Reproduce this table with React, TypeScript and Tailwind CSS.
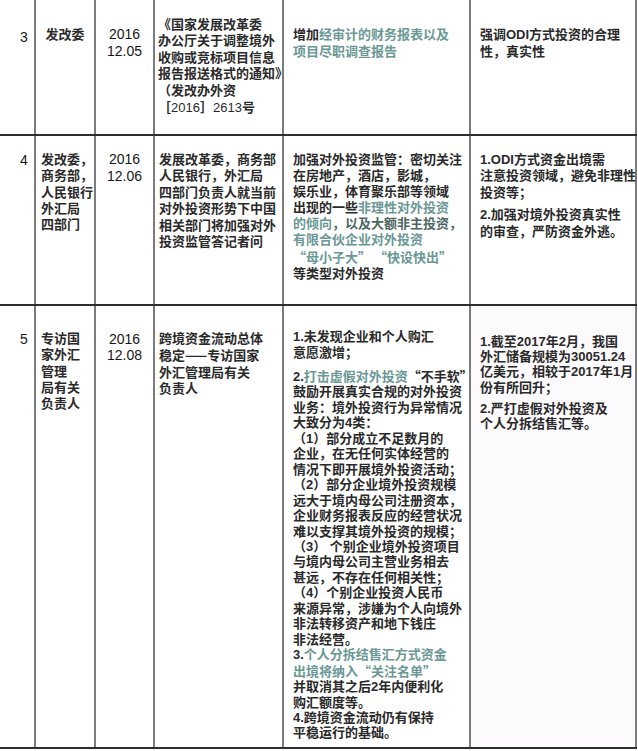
import type { ReactNode } from 'react';

const FONT = { fontFamily: '"Liberation Sans", "Noto Sans CJK SC", sans-serif' };

function T({ children }: { children: ReactNode }) {
  return <span className="text-[#6a9895]">{children}</span>;
}

// full-width punctuation from the CJK face
function C({ children }: { children: ReactNode }) {
  return <span className="font-['Noto_Sans_CJK_SC',sans-serif]">{children}</span>;
}

function Lines({ lines, lh }: { lines: ReactNode[]; lh: string }) {
  return (
    <div className={lh}>
      {lines.map((line, i) => (
        <div key={i} className="whitespace-nowrap">
          {line}
        </div>
      ))}
    </div>
  );
}

export default function App() {
  return (
    <div className="h-[751px] w-[638px] overflow-hidden bg-white text-[13px] font-semibold text-[#2a2a2a]" style={FONT}>
      {/* row 3 */}
      <div className="flex h-[136px] w-[637px] border-b-2 border-[#2e2e2e]">
        <div className="w-[36px] shrink-0 border-r-2 border-[#7c7c7c] pl-[20px] pt-[29px] text-[14px] font-normal leading-[16px] text-[#161616]">3</div>
        <div className="w-[60px] shrink-0 border-r-2 border-[#7c7c7c] pt-[27px] text-center leading-[16px]">发改委</div>
        <div className="w-[59px] shrink-0 border-r-2 border-[#7c7c7c] pt-[26px] text-center text-[14px] font-normal leading-[17px] text-[#161616]">
          <div>2016</div>
          <div>12.05</div>
        </div>
        <div className="w-[129px] shrink-0 border-r-2 border-[#7c7c7c] pl-[3px] pt-[17px]">
          <Lines
            lh="leading-[16.4px]"
            lines={[
              '《国家发展改革委',
              '办公厅关于调整境外',
              '收购或竞标项目信息',
              '报告报送格式的通知》',
              '（发改办外资',
              <>
                <C>［</C>
                <span className="font-normal">2016</span>
                <C>］</C>
                <span className="font-normal">2613</span>号
              </>,
            ]}
          />
        </div>
        <div className="w-[187px] shrink-0 border-r-2 border-[#7c7c7c] pl-[9px] pt-[27px]">
          <Lines
            lh="leading-[16.5px]"
            lines={[
              <>
                增加<T>经审计的财务报表以及</T>
              </>,
              <T>项目尽职调查报告</T>,
            ]}
          />
        </div>
        <div className="w-[166px] shrink-0 border-r-2 border-[#7c7c7c] pl-[9px] pt-[27px]">
          <Lines lh="leading-[16.5px]" lines={['强调ODI方式投资的合理', '性，真实性']} />
        </div>
      </div>

      {/* row 4 */}
      <div className="flex h-[170px] w-[637px] border-b-2 border-[#2e2e2e]">
        <div className="w-[36px] shrink-0 border-r-2 border-[#7c7c7c] pl-[20px] pt-[16px] text-[14px] font-normal leading-[16px] text-[#161616]">4</div>
        <div className="w-[60px] shrink-0 border-r-2 border-[#7c7c7c] pl-[5px] pt-[16px]">
          <Lines lh="leading-[16.3px]" lines={['发改委，', '商务部，', '人民银行', '外汇局', '四部门']} />
        </div>
        <div className="w-[59px] shrink-0 border-r-2 border-[#7c7c7c] pt-[15px] text-center text-[14px] font-normal leading-[17px] text-[#161616]">
          <div>2016</div>
          <div>12.06</div>
        </div>
        <div className="w-[129px] shrink-0 border-r-2 border-[#7c7c7c] pl-[4px] pt-[16px]">
          <Lines
            lh="leading-[16.4px]"
            lines={['发展改革委，商务部', '人民银行，外汇局', '四部门负责人就当前', '对外投资形势下中国', '相关部门将加强对外', '投资监管答记者问']}
          />
        </div>
        <div className="w-[187px] shrink-0 border-r-2 border-[#7c7c7c] pl-[9px] pt-[16px]">
          <Lines
            lh="leading-[16.1px]"
            lines={[
              '加强对外投资监管：密切关注',
              '在房地产，酒店，影城，',
              '娱乐业，体育聚乐部等领域',
              <>
                出现的一些<T>非理性对外投资</T>
              </>,
              <>
                <T>的倾向</T>
                <span className="text-[#4d6664]">，以及大额非主投资，</span>
              </>,
              <T>有限合伙企业对外投资</T>,
              <T>
                <C>“母小子大” “快设快出”</C>
              </T>,
              '等类型对外投资',
            ]}
          />
        </div>
        <div className="w-[166px] shrink-0 border-r-2 border-[#7c7c7c] pl-[9px] pt-[16px]">
          <Lines lh="leading-[16.4px]" lines={['1.ODI方式资金出境需', '注意投资领域，避免非理性', '投资等；']} />
          <div className="mt-[6px]">
            <Lines lh="leading-[16.4px]" lines={['2.加强对境外投资真实性', '的审查，严防资金外逃。']} />
          </div>
        </div>
      </div>

      {/* row 5 */}
      <div className="flex h-[443px] w-[637px] border-b-2 border-[#2e2e2e]">
        <div className="w-[36px] shrink-0 border-r-2 border-[#7c7c7c] pl-[20px] pt-[25px] text-[14px] font-normal leading-[16px] text-[#161616]">5</div>
        <div className="w-[60px] shrink-0 border-r-2 border-[#7c7c7c] pl-[5px] pt-[25px]">
          <Lines lh="leading-[16.3px]" lines={['专访国', '家外汇', '管理', '局有关', '负责人']} />
        </div>
        <div className="w-[59px] shrink-0 border-r-2 border-[#7c7c7c] pt-[25px] text-center text-[14px] font-normal leading-[16px] text-[#161616]">
          <div>2016</div>
          <div>12.08</div>
        </div>
        <div className="w-[129px] shrink-0 border-r-2 border-[#7c7c7c] pl-[4px] pt-[25px]">
          <Lines
            lh="leading-[16.3px]"
            lines={[
              '跨境资金流动总体',
              <>
                稳定<C>——</C>专访国家
              </>,
              '外汇管理局有关',
              '负责人',
            ]}
          />
        </div>
        <div className="w-[187px] shrink-0 border-r-2 border-[#7c7c7c] pl-[9px] pt-[23px]">
          <Lines lh="leading-[16px]" lines={['1.未发现企业和个人购汇', '意愿激增；']} />
          <div className="mt-[7px]">
            <Lines
              lh="leading-[15.45px]"
              lines={[
                <>
                  2.<T>打击虚假对外投资</T>
                  <C>“不手软”</C>
                </>,
                '鼓励开展真实合规的对外投资',
                '业务：境外投资行为异常情况',
                '大致分为4类：',
                '（1）部分成立不足数月的',
                '企业，在无任何实体经营的',
                '情况下即开展境外投资活动；',
                '（2）部分企业境外投资规模',
                '远大于境内母公司注册资本，',
                '企业财务报表反应的经营状况',
                '难以支撑其境外投资的规模；',
                '（3） 个别企业境外投资项目',
                '与境内母公司主营业务相去',
                '甚远，不存在任何相关性；',
                '（4）个别企业投资人民币',
                '来源异常，涉嫌为个人向境外',
                '非法转移资产和地下钱庄',
                '非法经营。',
                <>
                  3.<T>个人分拆结售汇方式资金</T>
                </>,
                <T>
                  出境将纳入<C>“关注名单”</C>
                </T>,
                '并取消其之后2年内便利化',
                '购汇额度等。',
                '4.跨境资金流动仍有保持',
                '平稳运行的基础。',
              ]}
            />
          </div>
        </div>
        <div className="w-[166px] shrink-0 border-r-2 border-[#7c7c7c] bg-[#fdfafd] pl-[9px] pt-[28px]">
          <Lines
            lh="leading-[15.2px]"
            lines={['1.截至2017年2月，我国', '外汇储备规模为30051.24', '亿美元，相较于2017年1月', '份有所回升；']}
          />
          <div className="mt-[6px]">
            <Lines lh="leading-[15.2px]" lines={['2.严打虚假对外投资及', '个人分拆结售汇等。']} />
          </div>
        </div>
      </div>
    </div>
  );
}
